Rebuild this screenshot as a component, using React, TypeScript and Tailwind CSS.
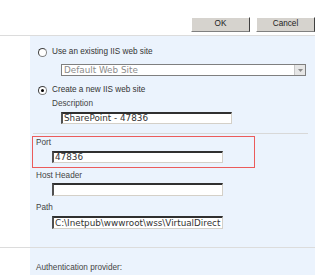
import React from 'react';

function Radio({ checked }: { checked?: boolean }) {
  return (
    <span className="relative inline-flex h-[9px] w-[9px] shrink-0 items-center justify-center rounded-full border border-[#808080] border-t-[#404040] border-l-[#404040] bg-white">
      {checked && <span className="h-[3px] w-[3px] rounded-full bg-black" />}
    </span>
  );
}

function TextBox({ value, className }: { value?: string; className: string }) {
  return (
    <div
      className={`flex items-center overflow-hidden whitespace-nowrap border-t-2 border-l-2 border-r border-b border-t-[#303030] border-l-[#505050] border-r-[#d4d0c8] border-b-[#d4d0c8] bg-white pl-[1px] text-[8.8px] leading-none text-[#333] [font-family:'DejaVu_Sans',sans-serif] ${className}`}
    >
      {value}
    </div>
  );
}

function Button({ label }: { label: string }) {
  return (
    <button className="flex h-[15px] w-[59px] items-center justify-center border border-t-white border-l-white border-r-[#404040] border-b-[#808080] bg-[#d6d3ce] text-[8.2px] leading-none text-[#222]">
      {label}
    </button>
  );
}

export default function App() {
  return (
    <div className="h-[275px] w-[320px] overflow-hidden bg-white text-[8.2px] leading-none text-[#444] [font-family:'Liberation_Sans',Arial,sans-serif]">
      {/* toolbar */}
      <div className="flex h-[35px] items-end justify-end gap-[6px] pb-[3px] pr-[5px]">
        <Button label="OK" />
        <Button label="Cancel" />
      </div>
      <div className="mr-[5px] h-px bg-[#dcdcdc]" />

      {/* web site section */}
      <div className="flex">
        <div className="w-[30px] shrink-0" />
        <div className="h-[211px] w-[285px] bg-[#ebf3fd]">
          <div className="mt-[11px] flex h-[10px] items-center gap-[5px] pl-[8px] text-[#333]">
            <Radio />
            <span>Use an existing IIS web site</span>
          </div>

          <div className="ml-[31px] mt-[7px] flex h-[12px] w-[245px] border border-[#7f7f7f] bg-white">
            <div className="flex flex-1 items-center pl-[2px] text-[8.8px] text-[#8c8c8c] [font-family:'DejaVu_Sans',sans-serif]">
              Default Web Site
            </div>
            <div className="flex w-[11px] items-center justify-center border-l border-[#c8c8c8] bg-[#e6e6e6]">
              <svg width="5" height="3" viewBox="0 0 5 3">
                <path d="M0 0h5L2.5 3z" fill="#8a8a8a" />
              </svg>
            </div>
          </div>

          <div className="mt-[9px] flex h-[10px] items-center gap-[5px] pl-[8px] text-[#333]">
            <Radio checked />
            <span>Create a new IIS web site</span>
          </div>

          <div className="ml-[22px] mt-[4px] flex h-[10px] items-center">Description</div>
          <TextBox value="SharePoint - 47836" className="ml-[31px] mt-[3px] h-[12px] w-[171px]" />

          <div className="ml-[3px] mt-[9px] h-px w-[275px] bg-[#d8d8d8]" />

          <div className="ml-[2px] mt-[2px] h-[32px] w-[223px] border border-[#eb5b5b] pb-[4px] pl-[3px] pt-[1px]">
            <div className="flex h-[10px] items-center">Port</div>
            <TextBox value="47836" className="ml-[16px] mt-[3px] h-[12px] w-[171px]" />
          </div>

          <div className="ml-[6px] mt-[3px] flex h-[10px] items-center">Host Header</div>
          <TextBox className="ml-[22px] mt-[2px] h-[13px] w-[171px]" />

          <div className="ml-[6px] mt-[7px] flex h-[10px] items-center">Path</div>
          <TextBox
            value="C:\Inetpub\wwwroot\wss\VirtualDirect"
            className="ml-[22px] mt-[3px] h-[13px] w-[171px]"
          />
        </div>
      </div>

      <div className="mr-[5px] h-px bg-[#dcdcdc]" />

      {/* authentication section */}
      <div className="flex">
        <div className="w-[30px] shrink-0" />
        <div className="h-[40px] w-[285px] bg-[#ebf3fd]">
          <div className="ml-[6px] mt-[15px] flex h-[10px] items-center">Authentication provider:</div>
        </div>
      </div>
    </div>
  );
}
